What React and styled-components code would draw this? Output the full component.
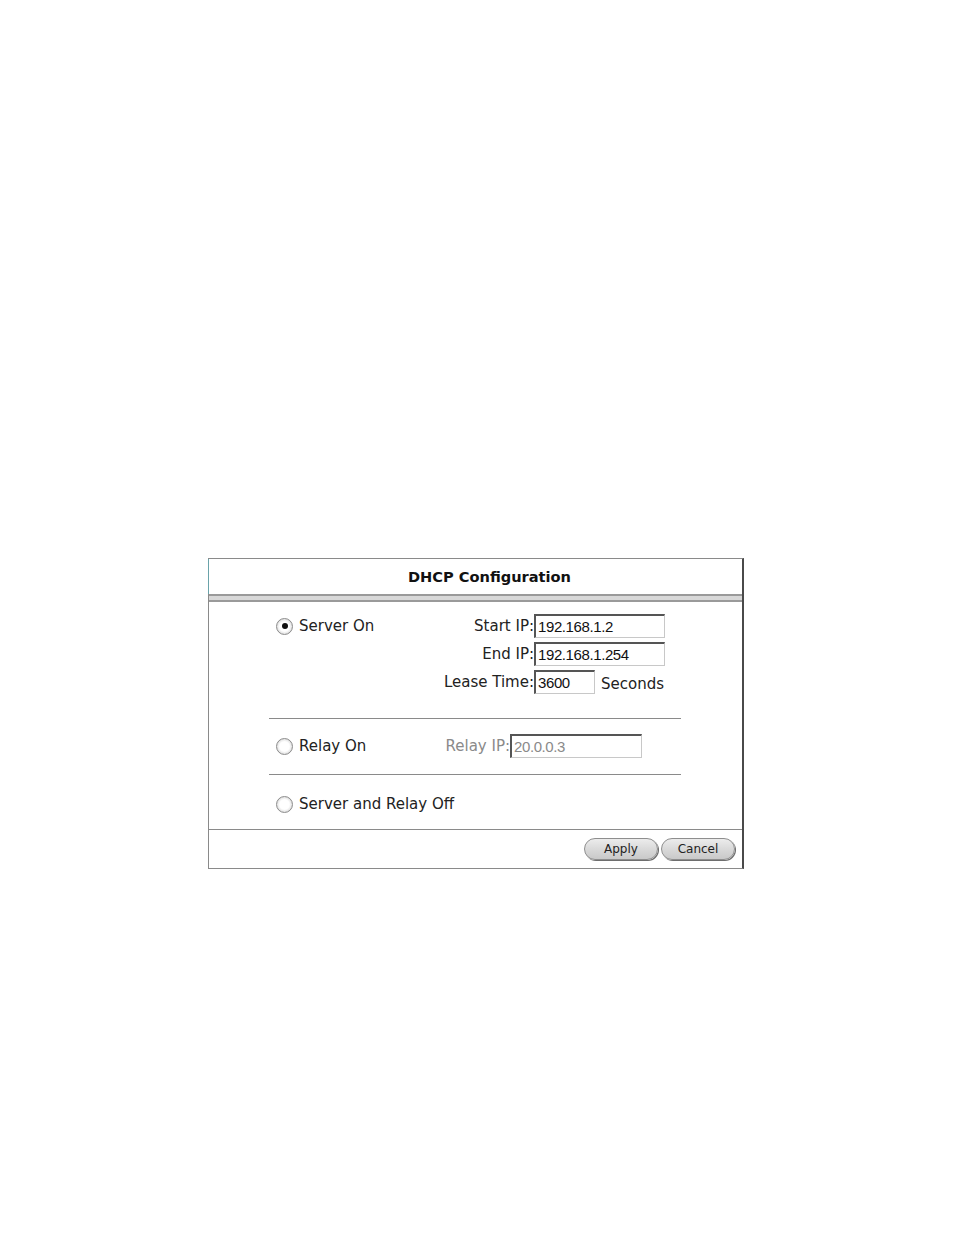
import React from 'react'
import styled, { createGlobalStyle } from 'styled-components'

const GlobalStyle = createGlobalStyle`
  html, body {
    margin: 0;
    padding: 0;
    background: #ffffff;
  }
  body {
    font-family: "DejaVu Sans", Verdana, sans-serif;
    color: #222;
  }
`

const Page = styled.div`
  width: 954px;
  height: 1235px;
  padding: 558px 0 0 208px;
  box-sizing: border-box;
`

const Panel = styled.div`
  width: 536px;
  box-sizing: border-box;
  border-top: 1px solid #8a8a8a;
  border-left: 1px solid #8a8a8a;
  border-right: 2px solid #4a4a4a;
  border-bottom: 1px solid #8a8a8a;
  display: flex;
  flex-direction: column;
`

const Header = styled.div`
  height: 35px;
  display: flex;
  align-items: center;
  justify-content: center;
  padding-left: 28px;
  font-size: 14.6px;
  font-weight: bold;
  color: #111;
  border-left: 1px solid #6aa3aa;
  margin-left: -1px;
`

const Band = styled.div`
  height: 8px;
  box-sizing: border-box;
  border-top: 2px solid #9a9a9a;
  border-bottom: 2px solid #9a9a9a;
  background: #d8d8d8;
`

const Body = styled.div`
  padding: 12px 0 0 60px;
`

const Section = styled.div`
  width: 412px;
  display: flex;
  align-items: ${p => p.$align || 'flex-start'};
  padding: ${p => p.$pad};
  border-bottom: ${p => (p.$divider ? '1px solid #8a8a8a' : 'none')};
  box-sizing: border-box;
`

const Choice = styled.label`
  width: 150px;
  flex-shrink: 0;
  padding-left: 7px;
  height: 24px;
  display: flex;
  align-items: center;
  gap: 6px;
  font-size: 15px;
  color: #222;
  white-space: nowrap;
`

const Radio = styled.span`
  width: 17px;
  height: 17px;
  box-sizing: border-box;
  border-radius: 50%;
  border: 1px solid #8c8c8c;
  background: radial-gradient(circle, #ffffff 45%, #e2e2e2 70%, #c8c8c8 100%);
  display: flex;
  align-items: center;
  justify-content: center;
  flex-shrink: 0;

  &::after {
    content: '';
    width: 6px;
    height: 6px;
    border-radius: 50%;
    background: ${p => (p.$checked ? '#111' : 'transparent')};
  }
`

const Fields = styled.div`
  display: grid;
  grid-template-columns: ${p => p.$labelWidth}px max-content;
  justify-content: start;
  row-gap: 4px;
  align-items: center;
`

const FieldLabel = styled.span`
  font-size: 15px;
  text-align: right;
  white-space: nowrap;
  color: ${p => (p.$disabled ? '#8a8a8a' : '#222')};
`

const Value = styled.div`
  display: flex;
  align-items: center;
`

const Input = styled.input`
  width: ${p => p.$w}px;
  height: 24px;
  box-sizing: border-box;
  margin: 0;
  padding: 0 2px;
  border-top: 2px solid #555;
  border-left: 2px solid #555;
  border-right: 1px solid #c8c8c8;
  border-bottom: 1px solid #c8c8c8;
  background: #fff;
  font-family: "Liberation Sans", Arial, sans-serif;
  font-size: 15px;
  letter-spacing: -0.4px;
  color: ${p => (p.disabled ? '#8a8a8a' : '#111')};
  outline: none;
`

const Unit = styled.span`
  font-size: 15px;
  padding-left: 6px;
  padding-top: 4px;
`

const Footer = styled.div`
  border-top: 1px solid #8a8a8a;
  display: flex;
  justify-content: flex-end;
  gap: 3px;
  padding: 8px 7px 8px 0;
`

const Button = styled.button`
  width: 74px;
  height: 22px;
  border-radius: 11px;
  border: 1px solid #8e8e8e;
  box-shadow: 1px 1px 0 #6e6e6e;
  background: linear-gradient(#ececec, #d6d6d6 60%, #c9c9c9);
  font-family: "DejaVu Sans", Verdana, sans-serif;
  font-size: 12px;
  color: #222;
  padding: 0;
  cursor: pointer;
`

const App = () => {
  return (
    <Page>
      <GlobalStyle />
      <Panel>
        <Header>DHCP Configuration</Header>
        <Band />
        <Body>
          <Section $divider $pad="0 0 24px 0">
            <Choice>
              <Radio $checked />
              Server On
            </Choice>
            <Fields $labelWidth={108}>
              <FieldLabel>Start IP:</FieldLabel>
              <Value>
                <Input $w={131} defaultValue="192.168.1.2" />
              </Value>
              <FieldLabel>End IP:</FieldLabel>
              <Value>
                <Input $w={131} defaultValue="192.168.1.254" />
              </Value>
              <FieldLabel>Lease Time:</FieldLabel>
              <Value>
                <Input $w={61} defaultValue="3600" />
                <Unit>Seconds</Unit>
              </Value>
            </Fields>
          </Section>
          <Section $divider $align="center" $pad="15px 0 16px 0">
            <Choice>
              <Radio />
              Relay On
            </Choice>
            <Fields $labelWidth={84}>
              <FieldLabel $disabled>Relay IP:</FieldLabel>
              <Value>
                <Input $w={132} disabled defaultValue="20.0.0.3" />
              </Value>
            </Fields>
          </Section>
          <Section $pad="17px 0 13px 0">
            <Choice>
              <Radio />
              Server and Relay Off
            </Choice>
          </Section>
        </Body>
        <Footer>
          <Button>Apply</Button>
          <Button>Cancel</Button>
        </Footer>
      </Panel>
    </Page>
  )
}

export default App
